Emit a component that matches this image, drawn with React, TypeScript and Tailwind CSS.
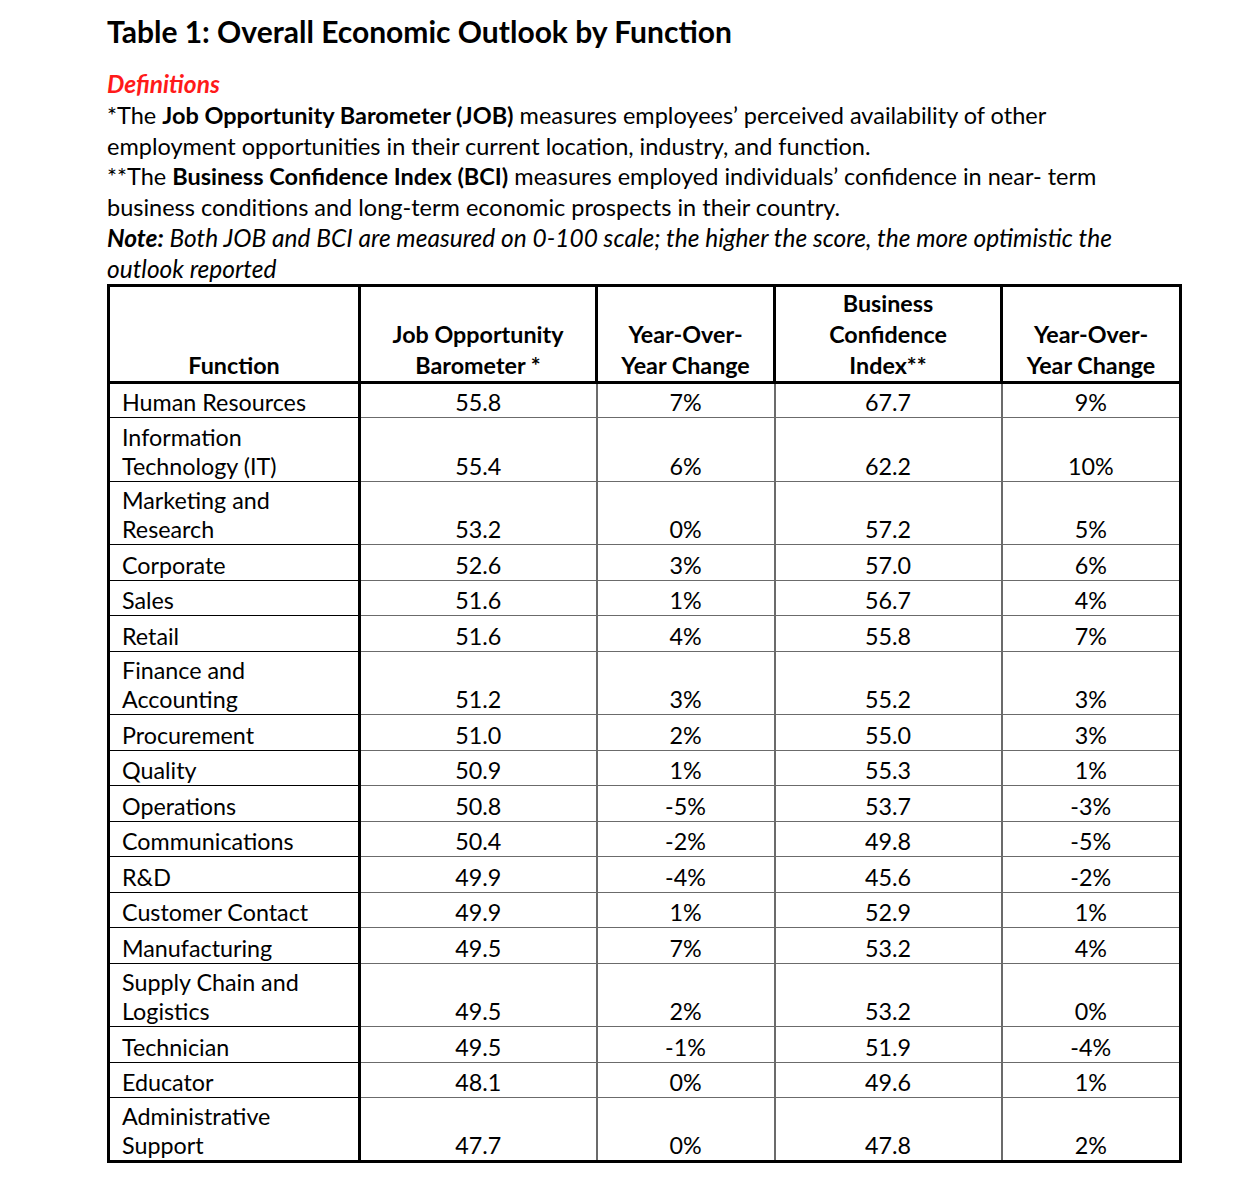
import React from "react";

type Row = {
  fn: string[];
  job: string;
  jobYoy: string;
  bci: string;
  bciYoy: string;
};

const rows: Row[] = [
  { fn: ["Human Resources"], job: "55.8", jobYoy: "7%", bci: "67.7", bciYoy: "9%" },
  { fn: ["Information", "Technology (IT)"], job: "55.4", jobYoy: "6%", bci: "62.2", bciYoy: "10%" },
  { fn: ["Marketing and", "Research"], job: "53.2", jobYoy: "0%", bci: "57.2", bciYoy: "5%" },
  { fn: ["Corporate"], job: "52.6", jobYoy: "3%", bci: "57.0", bciYoy: "6%" },
  { fn: ["Sales"], job: "51.6", jobYoy: "1%", bci: "56.7", bciYoy: "4%" },
  { fn: ["Retail"], job: "51.6", jobYoy: "4%", bci: "55.8", bciYoy: "7%" },
  { fn: ["Finance and", "Accounting"], job: "51.2", jobYoy: "3%", bci: "55.2", bciYoy: "3%" },
  { fn: ["Procurement"], job: "51.0", jobYoy: "2%", bci: "55.0", bciYoy: "3%" },
  { fn: ["Quality"], job: "50.9", jobYoy: "1%", bci: "55.3", bciYoy: "1%" },
  { fn: ["Operations"], job: "50.8", jobYoy: "-5%", bci: "53.7", bciYoy: "-3%" },
  { fn: ["Communications"], job: "50.4", jobYoy: "-2%", bci: "49.8", bciYoy: "-5%" },
  { fn: ["R&D"], job: "49.9", jobYoy: "-4%", bci: "45.6", bciYoy: "-2%" },
  { fn: ["Customer Contact"], job: "49.9", jobYoy: "1%", bci: "52.9", bciYoy: "1%" },
  { fn: ["Manufacturing"], job: "49.5", jobYoy: "7%", bci: "53.2", bciYoy: "4%" },
  { fn: ["Supply Chain and", "Logistics"], job: "49.5", jobYoy: "2%", bci: "53.2", bciYoy: "0%" },
  { fn: ["Technician"], job: "49.5", jobYoy: "-1%", bci: "51.9", bciYoy: "-4%" },
  { fn: ["Educator"], job: "48.1", jobYoy: "0%", bci: "49.6", bciYoy: "1%" },
  { fn: ["Administrative", "Support"], job: "47.7", jobYoy: "0%", bci: "47.8", bciYoy: "2%" },
];

const cell = "border-b border-r-2 border-[#6b6b6b] text-center align-bottom pb-0";

export default function App() {
  return (
    <div className="min-h-[1182px] bg-white pl-[107px] pt-[13px] text-black font-['Lato','Liberation_Sans',sans-serif]">
      <h1 className="text-[30px] font-bold leading-[37px]">Table 1: Overall Economic Outlook by Function</h1>

      <div className="mt-[19px] text-[23.5px] leading-[30.8px]">
        <p className="text-[24.5px] font-bold italic text-[#ff1a1a]">Definitions</p>
        <p>
          *The <b>Job Opportunity Barometer (JOB)</b> measures employees’ perceived availability of other
          <br />
          employment opportunities in their current location, industry, and function.
        </p>
        <p>
          **The <b>Business Confidence Index (BCI)</b> measures employed individuals’ confidence in near- term
          <br />
          business conditions and long-term economic prospects in their country.
        </p>
        <p className="text-[24.5px] italic">
          <b>Note:</b> Both JOB and BCI are measured on 0-100 scale; the higher the score, the more optimistic the
          <br />
          outlook reported
        </p>
      </div>

      <table className="-mt-px w-[1072px] table-fixed border-collapse border-[3px] border-black text-[23.3px]">
        <colgroup>
          <col className="w-[251px]" />
          <col className="w-[237px]" />
          <col className="w-[178px]" />
          <col className="w-[227px]" />
          <col className="w-[179px]" />
        </colgroup>
        <thead>
          <tr className="h-[97px]">
            {[["Function"], ["Job Opportunity", "Barometer *"], ["Year-Over-", "Year Change"], ["Business", "Confidence", "Index**"], ["Year-Over-", "Year Change"]].map(
              (lines, i) => (
                <th
                  key={i}
                  className="border-b-[3px] border-r-[3px] border-black p-0 text-center align-bottom font-bold leading-[31px]"
                >
                  {lines.map((l) => (
                    <div key={l}>{l}</div>
                  ))}
                </th>
              )
            )}
          </tr>
        </thead>
        <tbody className="leading-[29px]">
          {rows.map((r) => (
            <tr key={r.fn[0]} className={r.fn.length > 1 ? "h-[63.5px]" : "h-[35.5px]"}>
              <td className="border-b border-r-[3px] border-b-black border-r-black pb-0 pl-[12px] text-left align-bottom">
                {r.fn.map((l) => (
                  <div key={l}>{l}</div>
                ))}
              </td>
              <td className={cell}>{r.job}</td>
              <td className={cell}>{r.jobYoy}</td>
              <td className={cell}>{r.bci}</td>
              <td className={cell}>{r.bciYoy}</td>
            </tr>
          ))}
        </tbody>
      </table>
    </div>
  );
}
